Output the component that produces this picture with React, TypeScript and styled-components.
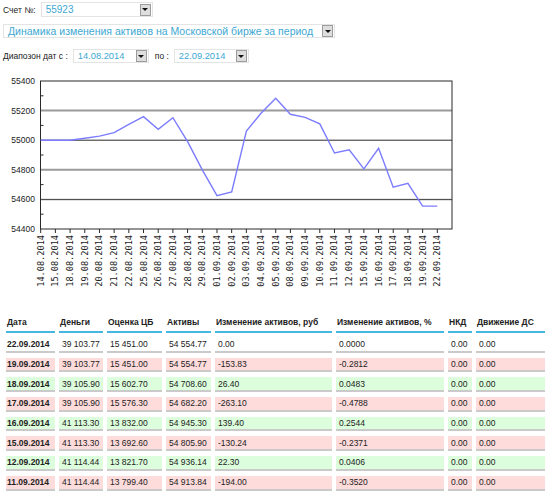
import styled, { createGlobalStyle } from "styled-components";

const GlobalStyle = createGlobalStyle`
  * { box-sizing: border-box; }
  body {
    margin: 0;
    background: #fff;
    font-family: "Liberation Sans", Arial, sans-serif;
    color: #222;
  }
`;

interface Row {
  date: string;
  money: string;
  cb: string;
  assets: string;
  deltaRub: string;
  deltaPct: string;
  nkd: string;
  flow: string;
  kind: "none" | "down" | "up";
}

const rows: Row[] = [
  { date: "22.09.2014", money: "39 103.77", cb: "15 451.00", assets: "54 554.77", deltaRub: "0.00", deltaPct: "0.0000", nkd: "0.00", flow: "0.00", kind: "none" },
  { date: "19.09.2014", money: "39 103.77", cb: "15 451.00", assets: "54 554.77", deltaRub: "-153.83", deltaPct: "-0.2812", nkd: "0.00", flow: "0.00", kind: "down" },
  { date: "18.09.2014", money: "39 105.90", cb: "15 602.70", assets: "54 708.60", deltaRub: "26.40", deltaPct: "0.0483", nkd: "0.00", flow: "0.00", kind: "up" },
  { date: "17.09.2014", money: "39 105.90", cb: "15 576.30", assets: "54 682.20", deltaRub: "-263.10", deltaPct: "-0.4788", nkd: "0.00", flow: "0.00", kind: "down" },
  { date: "16.09.2014", money: "41 113.30", cb: "13 832.00", assets: "54 945.30", deltaRub: "139.40", deltaPct: "0.2544", nkd: "0.00", flow: "0.00", kind: "up" },
  { date: "15.09.2014", money: "41 113.30", cb: "13 692.60", assets: "54 805.90", deltaRub: "-130.24", deltaPct: "-0.2371", nkd: "0.00", flow: "0.00", kind: "down" },
  { date: "12.09.2014", money: "41 114.44", cb: "13 821.70", assets: "54 936.14", deltaRub: "22.30", deltaPct: "0.0406", nkd: "0.00", flow: "0.00", kind: "up" },
  { date: "11.09.2014", money: "41 114.44", cb: "13 799.40", assets: "54 913.84", deltaRub: "-194.00", deltaPct: "-0.3520", nkd: "0.00", flow: "0.00", kind: "down" },
];

// chart points: date label and asset value
const series: [string, number][] = [
  ["14.08.2014", 55000], ["15.08.2014", 55000], ["18.08.2014", 55000],
  ["19.08.2014", 55013], ["20.08.2014", 55028], ["21.08.2014", 55051],
  ["22.08.2014", 55107], ["25.08.2014", 55159], ["26.08.2014", 55073],
  ["27.08.2014", 55152], ["28.08.2014", 54990], ["29.08.2014", 54799],
  ["01.09.2014", 54625], ["02.09.2014", 54650], ["03.09.2014", 55062],
  ["04.09.2014", 55182], ["05.09.2014", 55283], ["08.09.2014", 55175],
  ["09.09.2014", 55155], ["10.09.2014", 55110], ["11.09.2014", 54913.84],
  ["12.09.2014", 54936.14], ["15.09.2014", 54805.9], ["16.09.2014", 54945.3],
  ["17.09.2014", 54682.2], ["18.09.2014", 54708.6], ["19.09.2014", 54554.77],
  ["22.09.2014", 54554.77],
];

const columns = [
  { title: "Дата", width: 49 },
  { title: "Деньги", width: 44 },
  { title: "Оценка ЦБ", width: 55 },
  { title: "Активы", width: 45 },
  { title: "Изменение активов, руб", width: 117 },
  { title: "Изменение активов, %", width: 108 },
  { title: "НКД", width: 24 },
  { title: "Движение ДС", width: 69 },
];

const Page = styled.div`
  width: 550px;
  padding-top: 2px;
`;

const Controls = styled.div`
  padding-left: 3px;
  display: flex;
  flex-direction: column;
`;

const ControlRow = styled.div<{ $gap: number }>`
  display: flex;
  align-items: center;
  margin-top: ${(p) => p.$gap}px;
`;

const Label = styled.span<{ $ml?: number }>`
  font-size: 8.5px;
  color: #222;
  margin-left: ${(p) => p.$ml ?? 0}px;
  margin-right: 5px;
  white-space: nowrap;
`;

const SelectBox = styled.div<{ $w: number; $h: number; $fs: number }>`
  width: ${(p) => p.$w}px;
  height: ${(p) => p.$h}px;
  border: 1px solid #e4e4e4;
  background: #fff;
  color: #3ea8d2;
  font-size: ${(p) => p.$fs}px;
  display: flex;
  align-items: center;
  justify-content: space-between;
  padding-left: 4px;
  padding-right: 1px;
  white-space: nowrap;
`;

const Arrow = styled.div`
  width: 11px;
  height: 12px;
  flex-shrink: 0;
  background: #dedede;
  border: 1px solid #9c9c9c;
  display: flex;
  align-items: center;
  justify-content: center;
  &::after {
    content: "";
    border-left: 3px solid transparent;
    border-right: 3px solid transparent;
    border-top: 3px solid #111;
  }
`;

const ChartWrap = styled.div`
  margin-top: 7px;
  height: 235px;
`;

const Table = styled.table`
  margin-top: 5px;
  margin-left: 2px;
  width: 547px;
  table-layout: fixed;
  border-collapse: separate;
  border-spacing: 4px 5px;
  font-size: 8.5px;
`;

const Th = styled.th`
  height: 18px;
  padding: 0 0 2px 1px;
  text-align: left;
  font-weight: bold;
  font-size: 8.5px;
  color: #222;
  border-bottom: 2px solid #45b7e2;
  white-space: nowrap;
  vertical-align: middle;
`;

const Td = styled.td<{ $kind: Row["kind"]; $bold?: boolean }>`
  height: 14.7px;
  padding: 0 0 0 ${(p) => (p.$bold ? 1 : 3)}px;
  background: ${(p) =>
    p.$kind === "down" ? "#ffdcdc" : p.$kind === "up" ? "#dcfedc" : "#fff"};
  border-bottom: 2px solid #cacaca;
  font-weight: ${(p) => (p.$bold ? "bold" : "normal")};
  color: #222;
  white-space: nowrap;
  vertical-align: middle;
  line-height: 12px;
`;

const Select = ({ w, h, fs, value }: { w: number; h: number; fs: number; value: string }) => (
  <SelectBox $w={w} $h={h} $fs={fs}>
    <span>{value}</span>
    <Arrow />
  </SelectBox>
);

const Chart = () => {
  const left = 40.5;
  const right = 452;
  const top = 11;
  const bottom = 159;
  const step = (right - 40.7) / 28;
  const y = (v: number) => top + ((55400 - v) / 1000) * (bottom - top);
  const x = (i: number) => 40.7 + i * step;
  const majors = [55400, 55200, 55000, 54800, 54600, 54400];
  const minors = [55300, 55100, 54900, 54700, 54500];
  const points = series.map(([, v], i) => `${x(i).toFixed(1)},${y(v).toFixed(1)}`).join(" ");

  return (
    <svg width="460" height="235" viewBox="0 0 460 235">
      <line x1={left} y1={y(55200)} x2={right} y2={y(55200)} stroke="#9a9a9a" strokeWidth="2" />
      <line x1={left} y1={y(54800)} x2={right} y2={y(54800)} stroke="#9a9a9a" strokeWidth="2" />
      <line x1={left} y1={y(55000)} x2={right} y2={y(55000)} stroke="#2a2a2a" strokeWidth="1" />
      <line x1={left} y1={y(54600)} x2={right} y2={y(54600)} stroke="#2a2a2a" strokeWidth="1" />
      <line x1={left} y1={y(54600) + 1} x2={right} y2={y(54600) + 1} stroke="#dddddd" strokeWidth="1" />
      <rect x={left} y={top} width={right - left} height={bottom - top} fill="none" stroke="#2a2a2a" strokeWidth="1" />
      {minors.map((v) => (
        <line key={v} x1={left} y1={y(v)} x2={left + 3} y2={y(v)} stroke="#2a2a2a" strokeWidth="1" />
      ))}
      {majors.map((v) => (
        <text key={v} x="35" y={y(v) + 3} fontSize="8.5" textAnchor="end" fill="#222" fontFamily="Liberation Sans, Arial, sans-serif">
          {v}
        </text>
      ))}
      {series.map(([d], i) => (
        <g key={d}>
          <line x1={x(i)} y1={bottom} x2={x(i)} y2={bottom + 4} stroke="#2a2a2a" strokeWidth="1" />
          <text
            x={x(i) + 3}
            y={bottom + 6}
            fontSize="8.6"
            textAnchor="end"
            fill="#222"
            fontFamily="DejaVu Sans Mono, Liberation Mono, monospace"
            transform={`rotate(-90 ${x(i) + 3} ${bottom + 6})`}
          >
            {d}
          </text>
        </g>
      ))}
      <polyline points={points} fill="none" stroke="#7c7cff" strokeWidth="1.4" />
    </svg>
  );
};

export default function App() {
  return (
    <Page>
      <GlobalStyle />
      <Controls>
        <ControlRow $gap={0}>
          <Label>Счет №:</Label>
          <Select w={112} h={15} fs={10} value="55923" />
        </ControlRow>
        <ControlRow $gap={7}>
          <Select w={332} h={14} fs={10.5} value="Динамика изменения активов на Московской бирже за период" />
        </ControlRow>
        <ControlRow $gap={11}>
          <Label>Диапозон дат с :</Label>
          <Select w={76} h={14} fs={9.3} value="14.08.2014" />
          <Label $ml={6}>по :</Label>
          <Select w={75} h={14} fs={9.3} value="22.09.2014" />
        </ControlRow>
      </Controls>
      <ChartWrap>
        <Chart />
      </ChartWrap>
      <Table>
        <colgroup>
          {columns.map((c) => (
            <col key={c.title} style={{ width: c.width }} />
          ))}
        </colgroup>
        <thead>
          <tr>
            {columns.map((c) => (
              <Th key={c.title}>{c.title}</Th>
            ))}
          </tr>
        </thead>
        <tbody>
          {rows.map((r) => (
            <tr key={r.date}>
              <Td $kind={r.kind} $bold>{r.date}</Td>
              <Td $kind={r.kind}>{r.money}</Td>
              <Td $kind={r.kind}>{r.cb}</Td>
              <Td $kind={r.kind}>{r.assets}</Td>
              <Td $kind={r.kind}>{r.deltaRub}</Td>
              <Td $kind={r.kind}>{r.deltaPct}</Td>
              <Td $kind={r.kind}>{r.nkd}</Td>
              <Td $kind={r.kind}>{r.flow}</Td>
            </tr>
          ))}
        </tbody>
      </Table>
    </Page>
  );
}
